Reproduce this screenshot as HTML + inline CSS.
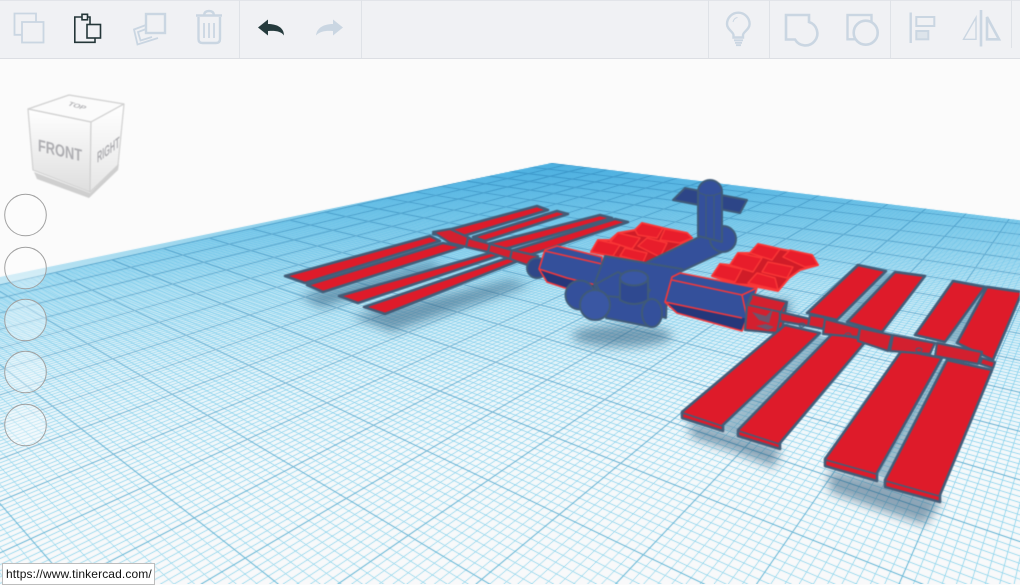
<!DOCTYPE html>
<html><head><meta charset="utf-8"><title>Tinkercad</title>
<style>
html,body{margin:0;padding:0;width:1020px;height:584px;overflow:hidden;background:#fbfbfb;font-family:"Liberation Sans",sans-serif}
#c{position:absolute;left:0;top:0;filter:blur(.25px)}
#scene{position:absolute;left:0;top:0;filter:blur(.4px)}
#cir{position:absolute;left:0;top:0}
#tb{position:absolute;left:0;top:0;filter:blur(.25px)}
#tip{position:absolute;left:2px;top:563px;height:20px;background:#fff;border:1px solid #bdbdbd;font-size:12px;line-height:21px;color:#111;padding-left:3px;width:148px;white-space:nowrap;letter-spacing:.12px}
.s{fill:#de1b2a;stroke:#425d78;stroke-width:2.6;stroke-linejoin:round}
.t{fill:#d3202f;stroke:#425d78;stroke-width:2.2;stroke-linejoin:round}
.b{fill:#34509b;stroke:#3f5a78;stroke-width:2;stroke-linejoin:round}
.d{fill:#2f4990;stroke:#3f5a78;stroke-width:2;stroke-linejoin:round}
.l{fill:none;stroke:#f5383a;stroke-width:1.6;stroke-linejoin:round}
.p{fill:#e81d2b;stroke:#f93636;stroke-width:1.5;stroke-linejoin:round}
.q{fill:#d01c28;stroke:#fb3a3a;stroke-width:2;stroke-linejoin:round}
.i{fill:none;stroke:#cad6e2;stroke-width:1.8}
.k{fill:none;stroke:#cad6e2;stroke-width:2.4}
.z{fill:none;stroke:#243638;stroke-width:1.6}
.c{fill:rgba(255,255,255,.35);stroke:#a0a0a0;stroke-width:1}
</style></head><body>
<canvas id="c" width="1020" height="584"></canvas>
<svg id="scene" width="1020" height="584" viewBox="0 0 1020 584">
<defs>
<filter id="bl" x="-30%" y="-30%" width="160%" height="160%"><feGaussianBlur stdDeviation="5"/></filter>
<filter id="b2" x="-30%" y="-30%" width="160%" height="160%"><feGaussianBlur stdDeviation="1.5"/></filter>
<linearGradient id="fg" x1="0" y1="0" x2="0" y2="1"><stop offset="0" stop-color="#fff"/><stop offset="1" stop-color="#dedede"/></linearGradient>
<linearGradient id="rg" x1="0" y1="0" x2="0" y2="1"><stop offset="0" stop-color="#fff"/><stop offset="1" stop-color="#e6e6e6"/></linearGradient>
</defs>

<!-- shadows -->
<g filter="url(#bl)" fill="#34617f" opacity=".55">
<polygon points="300,296 430,262 445,268 322,308"/>
<polygon points="352,316 510,280 530,285 392,332"/>
<ellipse cx="622" cy="336" rx="50" ry="11"/>
<polygon points="688,420 725,432 780,448 775,468 735,452 692,438"/>
<polygon points="828,470 880,480 942,500 925,525 880,510 830,492"/>
<polygon points="740,300 790,300 790,320 760,320"/>
</g>
<g filter="url(#b2)" fill="#5b8aa5" opacity=".55">
<polygon points="721,428 745,438 832,340 817,335"/>
<polygon points="874,473 890,480 948,362 938,358"/>
<polygon points="835,322 850,325 897,275 885,272"/>
<polygon points="944,340 958,345 988,290 982,286"/>
</g>

<!-- left wing -->
<polygon class="s" points="433,234 537,206 548,210 457,238"/>
<polygon class="s" points="473,237 557,211 568,214 485,241"/>
<polygon class="s" points="487,244 600,215 612,218 505,249"/>
<polygon class="s" points="510,251 615,219 628,222 527,256"/>
<polygon class="s" points="285,276 430,236 440,241 305,283"/>
<polygon class="s" points="307,285 443,243 463,247 323,292"/>
<polygon class="s" points="339,296 493,252 501,255 358,303"/>
<polygon class="s" points="364,307 513,256 523,259 385,314"/>
<!-- left truss -->
<polygon class="t" points="433,232 450,229 470,238 467,247 450,243"/>
<polygon class="t" points="468,238 490,244 488,252 466,247"/>
<polygon class="t" points="490,244 512,250 510,259 488,252"/>
<polygon class="t" points="512,250 538,256 536,268 510,259"/>
<circle cx="537" cy="268" r="10" fill="#2f4788" stroke="#3f5a78" stroke-width="2"/>

<!-- small red panels -->
<polygon class="q" points="591,252 598,240 610,240 618,233 635,230 642,223 663,228 687,233 692,238 680,245 667,252 660,262 643,264 620,258"/>
<polygon class="p" points="635,230 642,223 663,228 657,238 638,235"/>
<polygon class="p" points="665,229 687,233 692,238 680,243 660,240"/>
<polygon class="p" points="610,242 618,233 640,238 632,249"/>
<polygon class="p" points="638,246 647,238 667,243 660,257"/>
<polygon class="p" points="591,252 598,240 620,245 613,256"/>
<polygon class="p" points="620,256 625,248 647,253 643,262"/>
<polygon class="q" points="712,276 720,264 730,265 738,253 750,253 758,244 780,249 812,255 818,265 800,270 789,278 778,291 748,285 735,284"/>
<polygon class="p" points="750,253 758,244 780,249 772,260"/>
<polygon class="p" points="783,257 790,250 812,255 818,265 805,267"/>
<polygon class="p" points="730,265 738,253 762,258 753,272"/>
<polygon class="p" points="762,272 768,262 793,267 787,278"/>
<polygon class="p" points="712,276 720,264 742,269 735,282"/>
<polygon class="p" points="748,283 757,273 775,278 778,290"/>

<!-- cross panel & vertical cylinder -->
<polygon points="673,200 685,188 747,200 740,213" fill="#2d4587" stroke="#3f5a78" stroke-width="2" stroke-linejoin="round"/>
<polygon class="b" points="647,262 697,238 723,226 736,238 733,247 680,272 665,285"/>
<circle class="b" cx="723" cy="239" r="13"/>
<path class="b" d="M698 192 A12 12 0 0 1 722 192 V242 L698 236Z"/>
<path d="M698 192 Q710 199 722 192M706 195V238M714 195V240" fill="none" stroke="#3f5a78" stroke-width="1.3"/>

<!-- left hex -->
<polygon points="539,269 545,250 557,246 602,257 602,288 565,288 547,282" fill="#34509b"/>
<polygon points="539,269 567,278 600,286 597,292 565,288 547,282" fill="#25377a"/>
<polyline class="l" points="545,251 602,264"/>
<polyline class="l" points="539,269 567,278 600,286"/>
<polygon class="l" points="539,269 545,250 557,246 602,257 602,290 565,288 547,282"/>

<!-- center module -->
<polygon class="b" points="605,256 682,269 667,293 666,318 600,302 594,285"/>
<polygon class="b" points="596,284 618,272 650,290 640,305 610,312"/>
<circle class="b" cx="580" cy="295" r="14.5"/>
<polygon class="b" points="606,296 652,300 652,327 606,318"/>
<ellipse cx="652" cy="313" rx="10" ry="14" fill="#34509b" stroke="#3f5a78" stroke-width="2"/>
<circle cx="595" cy="305" r="15" fill="#3a57a3" stroke="#3f5a78" stroke-width="2"/>
<path class="d" d="M620 278V300Q634 308 648 300V278Z"/>
<ellipse cx="634" cy="278" rx="14" ry="7.5" fill="#3a57a3" stroke="#3f5a78" stroke-width="2"/>

<!-- right hex -->
<polygon points="665,302 672,277 680,273 757,288 747,318 742,331 677,313" fill="#34509b"/>
<polygon points="665,302 742,318 747,318 742,331 677,313" fill="#25377a"/>
<polyline class="l" points="672,280 742,295 757,288"/>
<polyline class="l" points="665,302 742,318"/>
<polyline class="l" points="742,295 747,318 742,331"/>
<polygon class="l" points="665,302 672,277 680,273 757,288 747,318 742,331 677,313"/>

<!-- far right strips -->
<polygon class="s" points="807,313 858,265 886,271 837,320"/>
<polygon class="s" points="847,322 895,272 925,276 882,332"/>
<polygon class="s" points="915,335 953,281 985,287 945,342"/>
<polygon class="s" points="957,343 987,287 1022,292 993,360"/>

<!-- red box -->
<polygon class="t" points="747,305 752,294 787,302 782,330 777,333 745,330"/>
<path d="M752 297l-4 8 33 7 5-9M781 312l-4 20" fill="none" stroke="#425d78" stroke-width="1.8"/>
<path d="M752 312l14 4 7-7-4 14-10-3zM756 326l12 4 6-3-8-3z" fill="#5a5f78" opacity=".85"/>

<!-- near right strips -->
<polygon class="s" points="682,412 785,325 820,333 723,425 723,431 682,418"/>
<polygon class="s" points="738,430 833,333 867,340 780,443 780,449 738,436"/>
<polygon class="s" points="825,459 902,350 942,358 877,473 877,481 825,466"/>
<polygon class="s" points="885,480 947,360 992,370 940,495 940,502 885,487"/>
<path d="M683 413L722 426M739 431L779 444M826 460L876 474M886 481L939 496" stroke="#425d78" stroke-width="1.6" fill="none"/>

<!-- right truss -->
<polygon class="t" points="780,312 810,319 808,326 780,321"/>
<polygon class="t" points="810,315 827,318 823,329 808,326"/>
<polygon class="t" points="825,319 860,328 858,337 823,334"/>
<polygon class="t" points="860,328 892,335 888,351 858,341"/>
<polygon class="t" points="893,335 935,343 930,354 890,351"/>
<polygon class="t" points="937,343 982,352 978,364 935,356"/>
<polygon class="t" points="982,358 995,362 993,368 980,364"/>
<ellipse cx="802" cy="325" rx="3" ry="2" fill="none" stroke="#425d78"/><ellipse cx="848" cy="335" rx="3" ry="2" fill="none" stroke="#425d78"/><ellipse cx="919" cy="350" rx="3" ry="2" fill="none" stroke="#425d78"/><ellipse cx="966" cy="363" rx="3" ry="2" fill="none" stroke="#425d78"/>

<!-- view cube -->
<polygon points="34,172 90,193 119,164 118,170 89,198 37,179" fill="#cfcfcf"/>
<polygon points="28,109 69,95 124,104 91,122" fill="#fbfbfb" stroke="#d0d0d0" stroke-width="1.2" stroke-linejoin="round"/>
<polygon points="28,109 91,122 90,192 33,170" fill="url(#fg)" stroke="#d0d0d0" stroke-width="1.2" stroke-linejoin="round"/>
<polygon points="91,122 124,104 118,165 90,192" fill="url(#rg)" stroke="#d0d0d0" stroke-width="1.2" stroke-linejoin="round"/>
<text transform="matrix(1,.24,0,1,38,151)" font-family="Liberation Sans" font-weight="bold" font-size="17" fill="#adadb1" textLength="44" lengthAdjust="spacingAndGlyphs">FRONT</text>
<text transform="matrix(.75,-.55,0,1,97,163)" font-family="Liberation Sans" font-weight="bold" font-size="15" fill="#adadb1" textLength="30" lengthAdjust="spacingAndGlyphs">RIGHT</text>
<text transform="matrix(1,.3,-.5,.5,67,105)" font-family="Liberation Sans" font-weight="bold" font-size="10" fill="#b3b3b6" textLength="17" lengthAdjust="spacingAndGlyphs">TOP</text>
</svg>

<svg id="cir" width="60" height="460" viewBox="0 0 60 460">
<circle class="c" cx="25.5" cy="215" r="20.8"/>
<circle class="c" cx="25.5" cy="268" r="20.8"/>
<circle class="c" cx="25.5" cy="320" r="20.8"/>
<circle class="c" cx="25.5" cy="372" r="20.8"/>
<circle class="c" cx="25.5" cy="425" r="20.8"/>
</svg>

<svg id="tb" width="1020" height="59" viewBox="0 0 1020 59">
<rect width="1020" height="58" fill="#f0f1f4"/>
<rect y="0" width="1020" height="1" fill="#e2e4e9"/>
<rect y="58" width="1020" height="1" fill="#dcdee3"/>
<g fill="#dfe2e7">
<rect x="239" y="0" width="1" height="58"/><rect x="361" y="0" width="1" height="58"/>
<rect x="708" y="0" width="1" height="58"/><rect x="769" y="0" width="1" height="58"/>
<rect x="890" y="0" width="1" height="58"/><rect x="1011" y="0" width="1" height="48"/>
</g>
<!-- copy -->
<path class="i" d="M22 34.8H14.5V13.5H36V22"/>
<rect class="i" x="22" y="22" width="21.5" height="20.5"/>
<!-- paste -->
<path class="z" d="M82 17H74.8V42.3H95V38M90 24.5V17H87"/>
<rect class="z" x="82" y="14.3" width="5.5" height="5.5"/>
<rect class="z" x="87" y="24.5" width="13.5" height="13.5"/>
<!-- duplicate -->
<rect class="k" x="146" y="14" width="19" height="19"/>
<path class="i" d="M146 25L134 29.5L137.5 44.5L158 38"/>
<path class="i" d="M146 29L138 32L140.5 40.5L152 37"/>
<!-- trash -->
<path class="k" d="M196 15.5H222M204 15Q204.5 11 209 11T214 15M198.5 17V39Q198.5 43 202.5 43H216Q220 43 220 39V17"/>
<path class="i" d="M204 23V38M209 23V38M214 23V38"/>
<!-- undo -->
<path fill="#263b3d" d="M258 27.5L268 19.5V24C276 24 284 27 284 35.5C281 31 275 30.5 268 31V35.5Z"/>
<!-- redo -->
<path fill="#cad6e2" d="M343 27.5L333 19.5V24C325 24 317 27 316 35.5C320 31 326 30.5 333 31V35.5Z"/>
<!-- bulb -->
<path class="k" d="M733.5 37.5V35C733.5 32 727 29.5 727 24A11.3 11.3 0 0 1 749.6 24C749.6 29.5 743 32 743 35V37.5Z"/>
<path class="i" d="M734 40.3H743M735 42.8H742M736 45.2H741"/>
<path class="i" d="M733 22Q734 18 737.5 17.5" style="stroke-width:1"/>
<!-- group shapes -->
<path class="k" d="M786 15H809V22A12 12 0 1 1 795 39.5H786Z" style="stroke-width:2.6"/>
<rect class="k" x="847.5" y="15" width="24" height="24.3"/>
<circle cx="865.7" cy="32.7" r="12" fill="#f0f1f4" stroke="#cad6e2" stroke-width="2.6"/>
<!-- align -->
<path class="k" d="M910.7 12.5V43"/>
<rect class="k" x="916.3" y="17" width="18" height="9" style="stroke-width:2"/>
<rect x="916.3" y="31" width="12" height="8.3" fill="#dde4eb" stroke="#cad6e2" stroke-width="2"/>
<!-- flip -->
<path class="k" d="M981 10V46.5" style="stroke-width:2.6"/>
<path class="i" d="M976 17.5V39.3H963.5Z" style="stroke-width:1.4"/>
<path class="k" d="M987 17V39.3H999Z" style="stroke-width:2.6"/>
</svg>
<div id="tip">https://www.tinkercad.com/</div>

<script>
(function(){
var cv=document.getElementById('c'),x=cv.getContext('2d');
var a=20.64,b=-88.2,c=351.7,d=-3.23,e=-2.30,f=355.7,g=-.05342,h=-.07736;
function P(u,v){var w=1+g*u+h*v;return [(a*u+b*v+c)/w,(d*u+e*v+f)/w];}
x.save();
x.beginPath();x.moveTo(552,163);x.lineTo(0,277);x.lineTo(0,584);x.lineTo(1020,584);x.lineTo(1020,220.3);x.closePath();x.clip();
var bg=x.createLinearGradient(0,163,0,584);
bg.addColorStop(0,'#55b1e0');bg.addColorStop(.12,'#86cdea');bg.addColorStop(.3,'#c8e9f5');
bg.addColorStop(.5,'#eaf6fb');bg.addColorStop(.7,'#f5f9fb');bg.addColorStop(1,'#f9f9fa');
x.fillStyle=bg;x.fillRect(0,150,1020,434);
var mi=x.createLinearGradient(0,163,0,584);
mi.addColorStop(0,'rgba(70,175,225,.28)');mi.addColorStop(.3,'rgba(105,198,235,.5)');mi.addColorStop(.5,'rgba(125,205,235,.75)');mi.addColorStop(1,'rgba(155,218,238,1)');
var ma=x.createLinearGradient(0,163,0,584);
ma.addColorStop(0,'rgba(35,125,180,.45)');ma.addColorStop(.4,'rgba(60,150,195,.6)');ma.addColorStop(1,'rgba(105,185,215,.9)');
function ln(u1,v1,u2,v2){var p=P(u1,v1),q=P(u2,v2);x.moveTo(p[0],p[1]);x.lineTo(q[0],q[1]);}
x.lineCap='butt';
x.strokeStyle=mi;x.lineWidth=.95;x.beginPath();
var i,t;
for(i=0;i<=200;i++){if(i%10==0)continue;
 t=-14+i/10; ln(-9,t,Math.min(11,(1+h*t-.06)/(-g)),t);
 t=-9+i/10; ln(t,-14,t,Math.min(6,(1+g*t-.06)/(-h)));
}
x.stroke();
x.strokeStyle=ma;x.lineWidth=1.15;x.beginPath();
for(i=0;i<=20;i++){
 t=-14+i; ln(-9,t,Math.min(11,(1+h*t-.06)/(-g)),t);
 t=-9+i; ln(t,-14,t,Math.min(6,(1+g*t-.06)/(-h)));
}
x.stroke();
x.restore();
})();
</script>
</body></html>
